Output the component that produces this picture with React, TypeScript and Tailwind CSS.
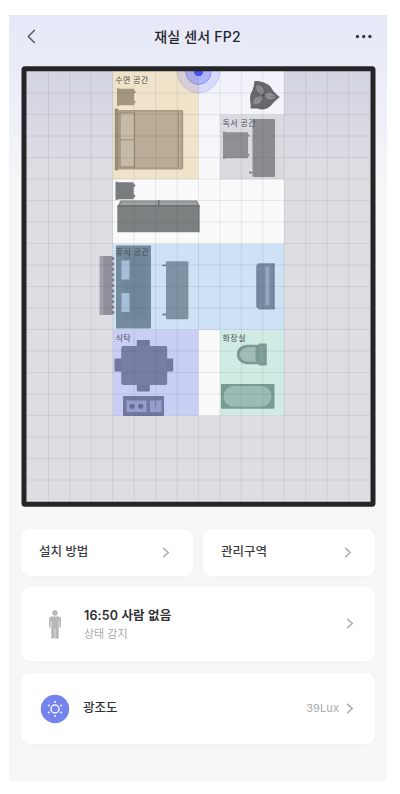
import React from 'react';

const columns = Array.from({ length: 15 }, (_, i) => 27 + (i + 1) * 21.44);
const rows = Array.from({ length: 19 }, (_, i) => 71.5 + (i + 1) * 21.5);

function Chevron({ className = '' }: { className?: string }) {
  return (
    <svg className={className} width="8" height="12" viewBox="0 0 8 12" fill="none" stroke="#b0b0b2" strokeWidth="1.6">
      <path d="M1.2 0.8 L6.2 5.5 L1.2 10.2" />
    </svg>
  );
}

function Chair({ x, y, w, h, fill }: { x: number; y: number; w: number; h: number; fill: string }) {
  return (
    <g fill={fill}>
      <rect x={x} y={y} width="2" height={h} rx="0.6" />
      <rect x={x} y={y + 0.8} width={w} height={h - 1.6} rx="0.8" />
      <circle cx={x + w + 0.4} cy={y + 4} r="1.2" />
      <circle cx={x + w + 0.4} cy={y + h - 4} r="1.2" />
    </g>
  );
}

function FloorPlan() {
  return (
    <svg className="block" width="355" height="442" viewBox="21 66 355 442">
      <defs>
        <clipPath id="room">
          <rect x="26" y="71" width="345" height="432" />
        </clipPath>
      </defs>
      {/* Floor outside the monitored cells */}
      <path fill="#141432" fillOpacity="0.105" fillRule="evenodd" d="M26 71H371V503H26Z M113 71H284V415.7H113Z" />
      <rect x="113" y="71" width="171" height="344.7" fill="#fff" fillOpacity="0.35" />

      {/* Zones */}
      <rect x="113" y="71" width="85.5" height="108.3" fill="#efe3ca" />
      <rect x="220" y="114.5" width="64" height="64.8" fill="#dadbe0" />
      <rect x="113" y="243.8" width="171" height="86.2" fill="#cde2f5" />
      <rect x="113" y="330" width="85.5" height="85.7" fill="#c9cef4" />
      <rect x="220" y="330" width="64" height="85.7" fill="#d0ebe4" />

      {/* Bedroom */}
      <Chair x={117} y={88} w={17} h={18} fill="#a39780" />
      <rect x="115.7" y="110" width="67.5" height="59.5" rx="1.5" fill="#a99d87" />
      <rect x="114.8" y="108.5" width="3.4" height="62" rx="0.8" fill="#998d76" />
      <rect x="119" y="111.8" width="62" height="55.5" fill="#b9ad98" />
      <rect x="120" y="113" width="14.5" height="54" fill="#c5baa5" stroke="#978b74" strokeWidth="1.2" />
      <path d="M120 139.8H135M178.5 111.5V167.5" stroke="#998d76" strokeWidth="1" />

      {/* Plant */}
      <path
        fill="#67686b"
        d="M254.5 81C259 80.8 266 82 270.5 86.5C272.5 90.5 276 94 279.8 97C276 100 273.5 102.5 271 105.5C267 110 261 110.3 257.2 108.4L250.5 108.5L250.7 104C249.6 99.5 249.8 94 252 91.3C253.6 88 254 84 254.5 81Z"
      />
      <path d="M256.5 85Q266 86 263 95Q255 92 256.5 85ZM264 95Q270 89 275.5 97Q269 103 264 95ZM262.5 96.5Q261 106 253 104Q253 96 262.5 96.5Z" fill="#8f9094" />
      <path d="M257 84L263 95.5L276 97M263 95.5L253 104" stroke="#77787c" strokeWidth="0.8" fill="none" />
      <circle cx="263.5" cy="95.3" r="1.3" fill="#4d4e52" />

      {/* Reading area */}
      <Chair x={223} y={131.5} w={25} h={27.5} fill="#8e9095" />
      <rect x="252.5" y="119" width="22.5" height="58" rx="1" fill="#898b91" />
      <circle cx="250.3" cy="172.5" r="1.2" fill="#808287" />
      <path d="M250 172.5H253" stroke="#808287" strokeWidth="1" />

      {/* Wardrobe */}
      <Chair x={115.7} y={181.5} w={18} h={18.5} fill="#797b7d" />
      <path d="M117.3 207L120.5 200.5H197L199.7 206V232.3H117.3Z" fill="#7d8081" />
      <path d="M121.5 201.5H196L198.2 205.5H119.5Z" fill="#9ca0a1" />
      <path d="M117.3 206H199.7M158.7 200V206" stroke="#6a6e6f" strokeWidth="1.4" />

      {/* Living area */}
      <rect x="99.5" y="256" width="8.5" height="59" fill="#a19fa7" />
      <rect x="103.5" y="256" width="9" height="59" fill="#918f99" />
      <path d="M113 257V315" stroke="#85838f" strokeWidth="2.4" strokeDasharray="3 2.4" />
      <rect x="116" y="245.5" width="35" height="83" rx="1" fill="#748b9e" />
      <rect x="124" y="251" width="23" height="68" fill="#708699" />
      <rect x="121.5" y="260.5" width="8" height="19" fill="#a5bfda" />
      <rect x="121.5" y="293" width="8" height="19" fill="#a5bfda" />
      <rect x="166" y="261.3" width="22.4" height="58" rx="1" fill="#7d93a4" />
      <path d="M163 265.3H166M163 314.5H166" stroke="#6f8698" strokeWidth="1.8" strokeLinecap="round" />
      <path d="M256.2 265.5L258.3 263.2H274.8V309.5H259L256.2 307Z" fill="#768ba1" />
      <rect x="265.3" y="266.5" width="4" height="39" fill="#93a9bf" />
      <path d="M258.5 265V308M273.5 264V309" stroke="#6c8198" strokeWidth="1" />

      {/* Dining area */}
      <g fill="#72779d">
        <rect x="136.8" y="340" width="13" height="51.5" rx="1" />
        <rect x="114.5" y="358.5" width="58.7" height="13" rx="1" />
      </g>
      <rect x="121.2" y="346" width="46" height="39" rx="2" fill="#787da6" />
      <rect x="123" y="396" width="41" height="20" rx="1" fill="#72789f" />
      <path d="M126.5 400.5H146.5V412H126.5ZM150 400.5H161.5V412H150Z" fill="#989ecb" />
      <circle cx="132" cy="406.3" r="2.6" fill="#676d98" />
      <circle cx="140.7" cy="406.3" r="2.6" fill="#676d98" />
      <path d="M155.5 401V406" stroke="#7d83ae" strokeWidth="1.4" />

      {/* Bathroom */}
      <path d="M260 344.7H247Q236.8 346 236.8 354.5Q236.8 363 247 364.3H260Z" fill="#799a95" />
      <path d="M255.5 347.2H247.5Q239.7 348.5 239.7 354.5Q239.7 360.5 247.5 361.8H255.5Z" fill="#a2bdb8" />
      <rect x="258.5" y="343.4" width="8.3" height="22" rx="0.8" fill="#7c9b95" />
      <rect x="260.5" y="346" width="3" height="16.5" fill="#87a59f" />
      <rect x="221" y="384" width="53.5" height="24.7" rx="1" fill="#789b92" />
      <rect x="223.5" y="386" width="48" height="20.7" rx="10.2" fill="#9bbbb4" />

      {/* Zone names */}
      <g fill="#4b4c50" fontSize="8" fontFamily='Inter, "Noto Sans CJK KR", sans-serif'>
        <text x="115.3" y="82.6" textLength="33">수면 공간</text>
        <text x="222.5" y="125.8" textLength="33">독서 공간</text>
        <text x="115.8" y="255.2" textLength="33">휴식 공간</text>
        <text x="115.6" y="341" textLength="15">식탁</text>
        <text x="222.5" y="341" textLength="23">화장실</text>
      </g>

      <g stroke="#303046" strokeOpacity="0.095" strokeWidth="1">
        {columns.map((x) => <line key={x} x1={x} x2={x} y1="71" y2="503" />)}
        {rows.map((y) => <line key={y} x1="26" x2="371" y1={y} y2={y} />)}
      </g>

      {/* Sensor */}
      <g clipPath="url(#room)">
        <circle cx="198.5" cy="71.7" r="21" fill="#777eff" fillOpacity="0.2" stroke="#777ee8" strokeOpacity="0.4" strokeWidth="0.8" />
        <circle cx="198.5" cy="71.7" r="12.7" fill="#656fff" fillOpacity="0.36" stroke="#5963f0" strokeOpacity="0.65" strokeWidth="0.8" />
        <circle cx="198.5" cy="71.7" r="4.6" fill="#4854eb" />
      </g>
      <rect x="24" y="68.8" width="349" height="435.4" rx="1" fill="none" stroke="#242527" strokeWidth="5" strokeLinejoin="round" />
    </svg>
  );
}

function PersonIcon() {
  return (
    <svg width="14" height="30" viewBox="0 0 14 30" fill="#b7b7b8">
      <circle cx="7" cy="4" r="2.7" />
      <path d="M3.5 7.6H10.5Q13 7.6 13 10.3V18.4H11.4V11.8H10.7V29.4H7.3V19.5H6.7V29.4H3.3V11.8H2.6V18.4H1V10.3Q1 7.6 3.5 7.6Z" />
    </svg>
  );
}

function LightIcon() {
  return (
    <svg width="30" height="30" viewBox="0 0 30 30" fill="none">
      <circle cx="15" cy="15" r="14.2" fill="#7583ed" />
      <circle cx="15" cy="15" r="4" stroke="#f3f4ff" strokeWidth="1.5" />
      <g fill="#f3f4ff">
        <circle cx="15" cy="8" r="1" />
        <circle cx="21.2" cy="11.5" r="1" />
        <circle cx="21.2" cy="18.5" r="1" />
        <circle cx="15" cy="22" r="1" />
        <circle cx="8.8" cy="18.5" r="1" />
        <circle cx="8.8" cy="11.5" r="1" />
      </g>
    </svg>
  );
}

const card = 'flex items-center rounded-[9px] bg-white shadow-[0_1px_7px_rgba(0,0,0,0.025)]';

export default function App() {
  return (
    <div className="h-[794px] w-[400px] overflow-hidden bg-white pt-[15px] pl-[9px] font-[Inter,'Noto_Sans_CJK_KR',sans-serif]">
      <main className="h-[766px] w-[378px] bg-[#f7f7f7] bg-[linear-gradient(#e6e8f7_0px,#ebedf8_70px,#f7f7f8_175px)] px-3">
        <header className="flex h-[51px] items-center justify-between pr-[3px] pb-[8px] pl-[6px]">
          <svg width="13" height="15" viewBox="0 0 13 15" fill="none" stroke="#55565c" strokeWidth="1.4">
            <path d="M7.8 1L1.3 7.5L7.8 14" />
          </svg>
          <h1 className="text-[14px] leading-5 font-medium tracking-[0.2px] text-[#25262c]">재실 센서 FP2</h1>
          <svg width="17" height="5" viewBox="0 0 17 5" fill="#3a3b42">
            <circle cx="2.5" cy="2.5" r="1.7" />
            <circle cx="8.7" cy="2.5" r="1.7" />
            <circle cx="14.9" cy="2.5" r="1.7" />
          </svg>
        </header>
        <FloorPlan />
        <div className="mt-[21px] flex gap-2.5">
          <button className={`${card} h-[47px] w-[172px] justify-between pr-[23px] pl-[18px]`}>
            <span className="text-[12.5px] font-medium text-[#3d3d3f]">설치 방법</span>
            <Chevron />
          </button>
          <button className={`${card} h-[47px] w-[172px] justify-between pr-[23px] pl-[18px]`}>
            <span className="text-[12.5px] font-medium text-[#3d3d3f]">관리구역</span>
            <Chevron />
          </button>
        </div>
        <section className={`${card} mt-[11px] h-[74px] w-[354px] pr-[21px] pl-[27px]`}>
          <PersonIcon />
          <div className="ml-[22px] flex-1">
            <div className="text-[12.5px] leading-[17px] font-semibold tracking-[0.15px] text-[#303033]">16:50 사람 없음</div>
            <div className="mt-[2px] text-[11px] leading-[16px] text-[#aaaaac]">상태 감지</div>
          </div>
          <Chevron />
        </section>
        <section className={`${card} mt-3 h-[71px] w-[354px] pr-[21px] pl-[19px]`}>
          <LightIcon />
          <div className="ml-[13px] flex-1 text-[12.5px] font-medium text-[#303033]">광조도</div>
          <span className="mr-[7px] text-[11px] tracking-[0.1px] text-[#aaaaac]">39Lux</span>
          <Chevron />
        </section>
      </main>
    </div>
  );
}
